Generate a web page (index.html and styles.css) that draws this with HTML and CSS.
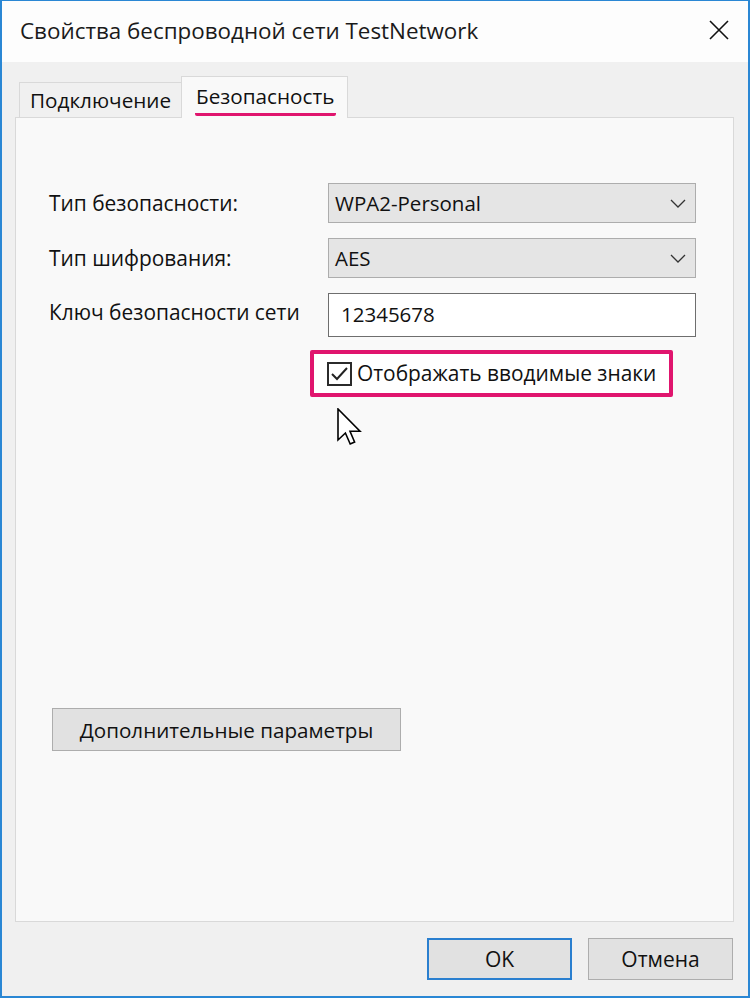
FILE: index.html
```html
<!DOCTYPE html>
<html lang="ru">
<head>
<meta charset="utf-8">
<title>Свойства беспроводной сети TestNetwork</title>
<link rel="stylesheet" href="styles.css">
</head>
<body>
<div class="window">
  <div class="titlebar">
    <span class="title">Свойства беспроводной сети TestNetwork</span>
    <svg class="close" width="20" height="20" viewBox="0 0 20 20"><path d="M1 1 L19 19 M19 1 L1 19" stroke="#111" stroke-width="1.6" fill="none"/></svg>
  </div>
  <div class="content">
    <div class="tabs">
      <div class="tab">Подключение</div>
      <div class="tab active"><span class="tab-label">Безопасность</span></div>
    </div>
    <div class="panel">
      <div class="form">
        <div class="label">Тип безопасности:</div>
        <div class="select"><span>WPA2-Personal</span><svg width="16" height="9" viewBox="0 0 16 9"><path d="M1 1 L8 8 L15 1" stroke="#333" stroke-width="1.3" fill="none"/></svg></div>
        <div class="label">Тип шифрования:</div>
        <div class="select"><span>AES</span><svg width="16" height="9" viewBox="0 0 16 9"><path d="M1 1 L8 8 L15 1" stroke="#333" stroke-width="1.3" fill="none"/></svg></div>
        <div class="label label-key">Ключ безопасности сети</div>
        <div class="input">12345678</div>
      </div>
      <div class="highlight">
        <span class="checkbox"><svg width="21" height="20" viewBox="0 0 21 20"><path d="M3 10 L8 15 L18 4" stroke="#222" stroke-width="2" fill="none"/></svg></span>
        <span class="check-label">Отображать вводимые знаки</span>
      </div>
      <svg class="cursor" width="26" height="38" viewBox="0 0 13 19"><path d="M0.5 0.5 L0.5 16 L4.2 12.5 L6.6 18 L8.8 17 L6.5 11.6 L11.5 11.6 Z" fill="#fff" stroke="#000" stroke-width="0.8" stroke-linejoin="miter"/></svg>
      <div class="adv-btn">Дополнительные параметры</div>
    </div>
    <div class="footer">
      <div class="btn default">OK</div>
      <div class="btn">Отмена</div>
    </div>
  </div>
</div>
</body>
</html>
```

FILE: styles.css
```css
* { box-sizing: border-box; }
html, body { margin: 0; padding: 0; }
body {
  font-family: "Open Sans", "Noto Sans", "DejaVu Sans", sans-serif;
  color: #111;
  background: #f0f0f0;
}
.window {
  width: 750px;
  height: 998px;
  border: 2px solid #2a87d4;
  border-top-width: 1px;
  display: flex;
  flex-direction: column;
}
.titlebar {
  height: 61px;
  background: #fdfdfd;
  display: flex;
  align-items: center;
  justify-content: space-between;
  padding: 0 19px 0 18px;
}
.title {
  font-size: 22.4px;
  color: #1a1a1a;
  margin-top: -2px;
}
.close { margin-top: -3px; }
.content {
  flex: 1;
  background: #f0f0f0;
  padding: 14px 14px 0 13px;
  display: flex;
  flex-direction: column;
}
.tabs {
  display: flex;
  align-items: flex-end;
  padding-left: 4px;
  height: 41px;
  position: relative;
  z-index: 1;
}
.tab {
  height: 35px;
  border: 1px solid #d9d9d9;
  border-bottom: none;
  border-right: none;
  background: #f0f0f0;
  font-size: 20.7px;
  padding: 0 10px 0 10px;
  display: flex;
  align-items: center;
  width: 162px;
}
.tab.active {
  height: 42px;
  margin-bottom: -1px;
  background: #f9f9f9;
  border-right: 1px solid #d9d9d9;
  width: 167px;
  padding: 0 0 0 13px;
  align-items: flex-start;
}
.tab-label {
  margin-top: 6px;
  display: inline-block;
  padding: 0 2px 4px 1px;
  border-bottom: 3px solid #e0156e;
  border-radius: 0 0 2px 2px;
  line-height: 26px;
}
.panel {
  position: relative;
  height: 805px;
  border: 1px solid #d9d9d9;
  background: #f9f9f9;
  padding: 65px 37px 0 33px;
  display: flex;
  flex-direction: column;
}
.form {
  display: grid;
  grid-template-columns: 1fr 368px;
  grid-template-rows: 40px 40px 44px;
  row-gap: 15px;
  align-items: center;
}
.label {
  font-size: 20.9px;
}
.label-key {
  padding-bottom: 6px;
}
.select {
  height: 40px;
  background: #e5e5e5;
  border: 1px solid #adadad;
  display: flex;
  align-items: center;
  justify-content: space-between;
  padding: 0 9px 0 6px;
  font-size: 20.5px;
}
.input {
  height: 44px;
  background: #fff;
  border: 1px solid #6e6e6e;
  display: flex;
  align-items: center;
  padding: 0 0 3px 12px;
  font-size: 20.5px;
}
.highlight {
  margin-top: 13px;
  margin-left: 261px;
  width: 363px;
  height: 47px;
  border: 4px solid #e0156e;
  border-radius: 2px;
  background: #fff;
  display: flex;
  align-items: center;
  padding-left: 13px;
}
.checkbox {
  width: 25px;
  height: 24px;
  border: 2px solid #2b2b2b;
  display: flex;
  align-items: center;
  justify-content: center;
  flex: none;
}
.check-label {
  margin-left: 5px;
  font-size: 20.9px;
  color: #111;
  white-space: nowrap;
  margin-top: -2px;
}
.cursor {
  position: absolute;
  left: 321px;
  top: 290px;
}
.adv-btn {
  margin-top: 311px;
  margin-left: 3px;
  width: 349px;
  height: 43px;
  background: #e1e1e1;
  border: 1px solid #adadad;
  display: flex;
  align-items: center;
  justify-content: center;
  font-size: 20.6px;
}
.footer {
  display: flex;
  justify-content: flex-end;
  gap: 16px;
  padding-top: 16px;
  padding-right: 1px;
}
.btn {
  width: 145px;
  height: 42px;
  background: #e1e1e1;
  border: 1px solid #adadad;
  display: flex;
  align-items: center;
  justify-content: center;
  font-size: 21px;
}
.btn.default {
  border: 2px solid #2a7fcf;
}
```
